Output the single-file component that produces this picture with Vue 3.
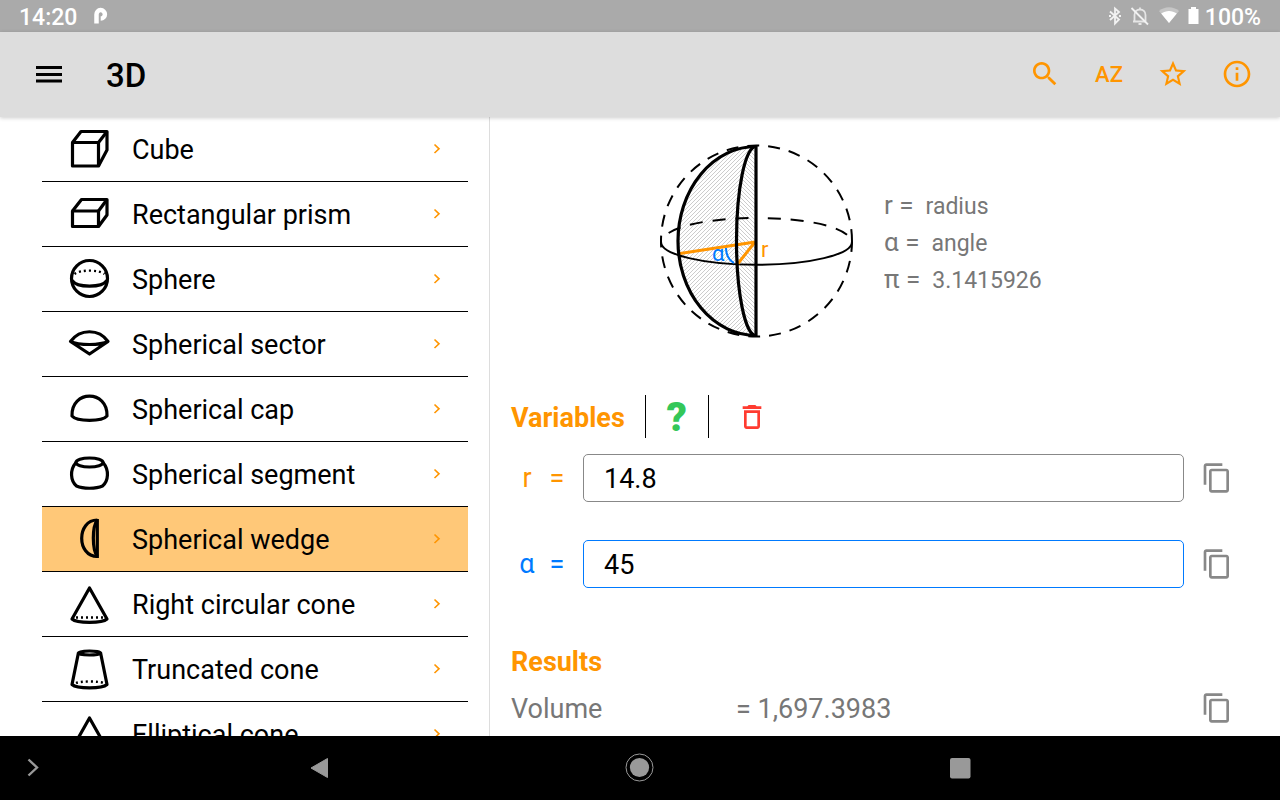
<script setup>
import { ref } from 'vue';

const selected = ref("Spherical wedge");
const radius = ref("14.8");
const angle = ref("45");

const shapes = [
    {
        name: "Cube",
        lines: ["M3.5 13.5H29.5V37H3.5Z", "M3.5 13.5L12 2.5H38V21L29.5 37", "M29.5 13.5L38 2.5"],
    },
    {
        name: "Rectangular prism",
        lines: ["M3.5 17H29.5V32.5H3.5Z", "M3.5 17L12.5 5.5H38V21L29.5 32.5", "M29.5 17L38 5.5"],
    },
    {
        name: "Sphere",
        lines: ["M2.5 19.5a18 18 0 1 0 36 0a18 18 0 1 0 -36 0", "M3 21.5C8 29 33 29 38 21.5"],
        dots: "M5.5 15C11 10.5 30 10.5 35.5 15",
    },
    {
        name: "Spherical sector",
        lines: ["M1.5 17.5C11 4.5 30 4.5 39 17.5L20.5 30L1.5 17.5C10 21.5 31 21.5 39 17.5"],
    },
    {
        name: "Spherical cap",
        lines: ["M3 27C2 0.5 39 0.5 38 27C33 32.8 8 32.8 3 27Z"],
    },
    {
        name: "Spherical segment",
        lines: ["M7 8.5a13.5 4.5 0 1 0 27 0a13.5 4.5 0 1 0 -27 0", "M7 8.5C0.5 16 1.5 27 7.5 32C14 35 27 35 33.5 32C39.5 27 40.5 16 34 8.5"],
    },
    {
        name: "Spherical wedge",
        lines: ["M28.3 0V39", "M28.3 1C7.5 1 7.5 37.5 28.3 37.5", "M28.3 1C23 8 23 30 28.3 37.5"],
    },
    {
        name: "Right circular cone",
        lines: ["M20.5 4L3 35C8 39.5 33 39.5 38 35Z"],
        dots: "M7 33.5H35",
    },
    {
        name: "Truncated cone",
        lines: ["M9.5 3.5L3 35.5C8 40 33 40 38 35.5L31.5 3.5", "M9.5 4a11 2 0 1 0 22 0a11 2 0 1 0 -22 0"],
        dots: "M7 34C12 32 29 32 35 34",
    },
    {
        name: "Elliptical cone",
        lines: ["M20.5 4L3 35C8 39.5 33 39.5 38 35Z"],
        dots: "M7 33.5H35",
    },
];

const copyIcon = "M16 1H4c-1.1 0-2 .9-2 2v14h2V3h12V1zm3 4H8c-1.1 0-2 .9-2 2v14c0 1.1.9 2 2 2h11c1.1 0 2-.9 2-2V7c0-1.1-.9-2-2-2zm0 16H8V7h11v14z";

function copy(value) {
    if (navigator.clipboard) {
        navigator.clipboard.writeText(value);
    }
}

function clearAll() {
    radius.value = "";
    angle.value = "";
}
</script>

<template>
    <div class="screen">
        <!-- Status bar -->
        <div class="status">
            <span>14:20</span>
            <svg class="status__p" width="16" height="18" viewBox="0 0 16 18">
                <path d="M3.5 16.500V7.500A4.200 4.200 0 1 1 7.700 11.500" fill="none" stroke="#fff" stroke-width="4.500" />
            </svg>
            <div class="status__icons">
                <svg width="14" height="20" viewBox="0 0 14 20">
                    <path d="M2 5.500L11 13.500L7 17.500V2.500L11 6L2 14" fill="none" stroke="#f2f2f2" stroke-width="1.800" />
                    <path d="M1 10h2M11 10h2" stroke="#f2f2f2" stroke-width="2" />
                </svg>
                <svg width="20" height="20" viewBox="0 0 20 20">
                    <path d="M4.500 15.500V9C4.500 5.500 7 3.500 10 3.500S15.500 5.500 15.500 9V15.500M3 15.500H16M10 1.500V4M8.500 18H11.500" fill="none" stroke="#e6e6e6" stroke-width="1.800" />
                    <path d="M1.500 2L18 18.500" stroke="#f2f2f2" stroke-width="1.800" />
                </svg>
                <svg width="22" height="18" viewBox="0 0 22 18">
                    <path d="M1 4C7 -1 15 -1 21 4L11 16Z" fill="#c6c6c6" />
                    <path d="M3.200 6.500C8 3 14 3 18.800 6.500L11 16Z" fill="#fff" />
                </svg>
                <svg width="11" height="20" viewBox="0 0 11 20">
                    <path d="M0.500 3H3V1H8V3H10.500V18H0.500Z" fill="#fff" />
                </svg>
                <span>100%</span>
            </div>
        </div>

        <!-- App bar -->
        <header class="bar">
            <button class="bar__menu" aria-label="Menu">
                <svg width="26" height="17" viewBox="0 0 26 17">
                    <path d="M0 1.500H26M0 8.500H26M0 15H26" stroke="#000" stroke-width="2.800" />
                </svg>
            </button>
            <h1>3D</h1>
            <div class="bar__actions">
                <button aria-label="Search">
                    <svg width="32" height="32" viewBox="0 0 24 24">
                        <path d="M15.500 14h-.79l-.28-.27C15.410 12.590 16 11.110 16 9.500 16 5.910 13.090 3 9.500 3S3 5.910 3 9.500 5.910 16 9.500 16c1.610 0 3.090-.59 4.230-1.570l.27.28v.79l5 4.990L20.490 19l-4.990-5zm-6 0C7.010 14 5 11.990 5 9.500S7.010 5 9.500 5 14 7.010 14 9.500 11.990 14 9.500 14z" />
                    </svg>
                </button>
                <button class="bar__sort">AZ</button>
                <button aria-label="Favourites">
                    <svg width="32" height="32" viewBox="0 0 24 24">
                        <path d="M22 9.240l-7.190-.62L12 2 9.190 8.630 2 9.240l5.460 4.730L5.820 21 12 17.270 18.180 21l-1.630-7.030L22 9.240zM12 15.400l-3.760 2.270 1-4.280-3.320-2.880 4.380-.38L12 6.100l1.710 4.040 4.380.38-3.320 2.880 1 4.280L12 15.400z" />
                    </svg>
                </button>
                <button aria-label="Info">
                    <svg width="32" height="32" viewBox="0 0 24 24">
                        <path d="M11 7h2v2h-2zm0 4h2v6h-2zm1-9C6.480 2 2 6.480 2 12s4.480 10 10 10 10-4.480 10-10S17.520 2 12 2zm0 18c-4.410 0-8-3.590-8-8s3.590-8 8-8 8 3.590 8 8-3.590 8-8 8z" />
                    </svg>
                </button>
            </div>
        </header>

        <main class="content">
            <!-- Shape list -->
            <nav class="list">
                <button
                    v-for="shape in shapes"
                    :key="shape.name"
                    class="item"
                    :class="{ 'item--active': shape.name === selected }"
                    @click="selected = shape.name"
                >
                    <svg class="item__icon" width="40" height="40" viewBox="0 0 40 40">
                        <path v-for="line in shape.lines" :key="line" :d="line" />
                        <path v-if="shape.dots" class="item__dots" :d="shape.dots" />
                    </svg>
                    <span class="item__name">{{ shape.name }}</span>
                    <svg width="8" height="12" viewBox="0 0 8 12">
                        <path d="M1.500 1.500L6 5.800L1.500 10" fill="none" stroke="#ff9500" stroke-width="1.600" />
                    </svg>
                </button>
            </nav>

            <section class="detail">
                <!-- Drawing and legend -->
                <div class="figure">
                    <svg class="figure__img" width="220" height="220" viewBox="0 0 220 220">
                        <defs>
                            <pattern id="hatchLeft" width="4" height="4" patternUnits="userSpaceOnUse">
                                <path d="M-1 1L1 -1M0 4L4 0M3 5L5 3" stroke="#999" stroke-width="0.500" />
                            </pattern>
                            <pattern id="hatchRight" width="4" height="4" patternUnits="userSpaceOnUse">
                                <path d="M-1 3L1 5M0 0L4 4M3 -1L5 1" stroke="#999" stroke-width="0.500" />
                            </pattern>
                        </defs>
                        <path d="M107 16A78 95 0 0 0 107 206A19.500 95 0 0 1 107 16Z" fill="url(#hatchLeft)" />
                        <path d="M107 16A19.500 95 0 0 0 107 206Z" fill="url(#hatchRight)" />
                        <g fill="none" stroke="#000" stroke-width="2">
                            <path d="M203 111A95.500 95.500 0 0 0 12 111A95.500 95.500 0 0 0 203 111" stroke-dasharray="12 9" />
                            <path d="M203 112C196 80 20 80 12 112" stroke-dasharray="0 9 13 10 13 10 13 10 13 10" />
                            <path d="M12 112A95.500 22.800 0 0 0 203 112" />
                        </g>
                        <path d="M106 112L31 123.500M106 112L89 133.500" stroke="#ff9500" stroke-width="3" />
                        <path d="M77 118C77 124 80 130 85 133" fill="none" stroke="#007aff" stroke-width="2" />
                        <g fill="none" stroke="#000" stroke-width="3.200">
                            <path d="M107 15V207" />
                            <path d="M107 16.500A78 94.500 0 0 0 107 205.500" />
                            <path d="M107 16.500A19.500 94.500 0 0 0 107 205.500" />
                        </g>
                        <text x="63" y="131" fill="#007aff">α</text>
                        <text x="112" y="127" fill="#ff9500">r</text>
                    </svg>
                    <div class="legend">
                        <p><b>r =</b>radius</p>
                        <p><b>α =</b>angle</p>
                        <p><b>π =</b>3.1415926</p>
                    </div>
                </div>

                <!-- Variables -->
                <div class="tools">
                    <h2>Variables</h2>
                    <button class="tools__help" aria-label="Help">?</button>
                    <button class="tools__clear" aria-label="Clear" @click="clearAll()">
                        <svg width="32" height="32" viewBox="0 0 24 24">
                            <path fill="#ff3b30" d="M6 19c0 1.100.9 2 2 2h8c1.100 0 2-.9 2-2V7H6v12zM8 9h8v10H8V9zm7.500-5l-1-1h-5l-1 1H5v2h14V4z" />
                        </svg>
                    </button>
                </div>
                <div class="field field--radius">
                    <label for="radius">r</label>
                    <span>=</span>
                    <input id="radius" v-model="radius" type="text" />
                    <button class="copy" aria-label="Copy r" @click="copy(radius)">
                        <svg width="32" height="32" viewBox="0 0 24 24"><path :d="copyIcon" /></svg>
                    </button>
                </div>
                <div class="field field--angle">
                    <label for="angle">α</label>
                    <span>=</span>
                    <input id="angle" v-model="angle" type="text" />
                    <button class="copy" aria-label="Copy α" @click="copy(angle)">
                        <svg width="32" height="32" viewBox="0 0 24 24"><path :d="copyIcon" /></svg>
                    </button>
                </div>

                <!-- Results -->
                <h2>Results</h2>
                <div class="result">
                    <span>Volume</span>
                    <span>= 1,697.3983</span>
                    <button class="copy" aria-label="Copy volume" @click="copy('1,697.3983')">
                        <svg width="32" height="32" viewBox="0 0 24 24"><path :d="copyIcon" /></svg>
                    </button>
                </div>
            </section>
        </main>

        <!-- System navigation -->
        <footer class="system">
            <button class="system__more" aria-label="More">
                <svg width="12" height="20" viewBox="0 0 12 20">
                    <path d="M1.500 1.500L10 9.500L1.500 17.500" fill="none" stroke="#999" stroke-width="2.400" />
                </svg>
            </button>
            <button aria-label="Back">
                <svg width="22" height="22" viewBox="0 0 22 22">
                    <path d="M18.500 1.500V20.500L2 11Z" fill="#999" stroke="#999" stroke-linejoin="round" />
                </svg>
            </button>
            <button aria-label="Home">
                <svg width="30" height="30" viewBox="0 0 30 30">
                    <circle cx="14.500" cy="14.500" r="13.500" fill="none" stroke="#999" />
                    <circle cx="14.500" cy="14.500" r="9.600" fill="#999" />
                </svg>
            </button>
            <button aria-label="Recent">
                <svg width="22" height="22" viewBox="0 0 22 22">
                    <rect x="1" y="1" width="20.500" height="20.500" rx="2" fill="#999" />
                </svg>
            </button>
        </footer>
    </div>
</template>

<style>
body {
    background: #fff;
    overflow: hidden;
}
</style>

<style scoped>
.screen {
    height: 100vh;
    display: flex;
    flex-direction: column;
    font-family: Roboto, "Liberation Sans", sans-serif;
    color: #000;
}

button {
    display: flex;
    align-items: center;
    justify-content: center;
    margin: 0;
    padding: 0;
    border: none;
    background: none;
    font: inherit;
    color: inherit;
    cursor: pointer;
}

svg {
    display: block;
    flex: none;
}

h1,
h2,
p {
    margin: 0;
}

/* Status bar */
.status {
    flex: none;
    display: flex;
    align-items: center;
    height: 32px;
    padding: 0 19px;
    background: #aaa;
    color: #fff;
    font-size: 23px;
    font-weight: 500;
}

.status span {
    padding-top: 2px;
}

.status__p {
    margin-left: 16px;
}

.status__icons {
    margin-left: auto;
    display: flex;
    align-items: center;
    gap: 8px;
}

.status__icons span {
    margin-left: -2px;
}

/* App bar */
.bar {
    flex: none;
    position: relative;
    display: flex;
    align-items: center;
    height: 85px;
    padding: 0 11px 0 36px;
    background: #ddd;
    box-shadow: 0 1px 4px rgba(0, 0, 0, 0.2);
}

h1 {
    margin-left: 44px;
    padding-top: 2px;
    font-size: 33px;
    font-weight: 500;
}

.bar__actions {
    margin-left: auto;
    margin-bottom: 2px;
    display: flex;
}

.bar__actions button {
    width: 64px;
    height: 64px;
    color: #ff9500;
}

.bar__actions svg {
    fill: #ff9500;
}

.bar .bar__sort {
    padding-top: 2px;
    font-size: 22px;
    font-weight: 500;
}

/* Two panes */
.content {
    flex: 1;
    min-height: 0;
    display: grid;
    grid-template-columns: 490px 1fr;
}

.list {
    overflow-y: auto;
    scrollbar-width: none;
    padding: 0 21px 0 42px;
    border-right: 1px solid #ddd;
}

.item {
    width: 100%;
    height: 65px;
    padding: 0 27px;
    border-bottom: 1px solid #000;
    text-align: left;
}

.item--active {
    background: #ffc878;
}

.item__icon {
    overflow: visible;
    fill: none;
    stroke: #000;
    stroke-width: 3.2;
    stroke-linejoin: round;
}

.item__dots {
    stroke-width: 2.4;
    stroke-dasharray: 2 3;
}

.item__name {
    flex: 1;
    margin-left: 23px;
    padding-top: 2px;
    font-size: 27px;
}

/* Details */
.detail {
    overflow: hidden;
    padding-top: 13px;
}

.figure {
    display: grid;
    grid-template-columns: 1fr 1fr;
    height: 265px;
    padding-right: 2px;
}

.figure__img {
    justify-self: end;
    margin-right: 15px;
    font-size: 22px;
}

.legend {
    padding-top: 58px;
    color: #777;
    font-size: 23px;
    line-height: 37px;
}

.legend b {
    margin-right: 12px;
    font-size: 26px;
    line-height: 26px;
    font-weight: 400;
}

h2 {
    padding-top: 2px;
    padding-left: 21px;
    color: #ff9500;
    font-size: 27px;
    font-weight: 700;
}

.tools {
    display: flex;
    align-items: center;
    height: 43px;
    margin-bottom: 16px;
}

.tools__help {
    width: 64px;
    height: 43px;
    margin-left: 20px;
    padding-top: 2px;
    border-left: 1px solid #000;
    border-right: 1px solid #000;
    color: #34c759;
    font-size: 40px;
    font-weight: 900;
}

.tools__clear {
    margin-left: 27px;
}

.field {
    display: flex;
    align-items: center;
    margin-bottom: 38px;
    padding: 0 47px 0 21px;
    font-size: 27px;
}

.field label {
    width: 32px;
    text-align: center;
}

.field span {
    width: 28px;
    text-align: center;
}

.field input {
    flex: 1;
    min-width: 0;
    height: 48px;
    box-sizing: border-box;
    margin: 0 17px 0 12px;
    padding: 2px 20px 0;
    border: 1px solid #888;
    border-radius: 5px;
    outline: none;
    background: #fff;
    color: #000;
    font: inherit;
}

.field--radius {
    color: #ff9500;
}

.field--angle {
    margin-bottom: 56px;
    color: #007aff;
}

.field--angle input {
    border-color: #007aff;
}

.copy svg {
    fill: #888;
}

.result {
    display: flex;
    align-items: center;
    margin-top: 13px;
    padding: 0 47px 0 21px;
    color: #777;
    font-size: 27px;
}

.result span {
    padding-top: 2px;
}

.result span:first-child {
    width: 225px;
}

.result .copy {
    margin-left: auto;
}

/* System navigation */
.system {
    flex: none;
    position: relative;
    display: grid;
    grid-template-columns: 1fr 2fr 2fr 2fr 1fr;
    height: 64px;
    background: #000;
}

.system__more {
    justify-content: flex-start;
    padding-left: 27px;
}
</style>
